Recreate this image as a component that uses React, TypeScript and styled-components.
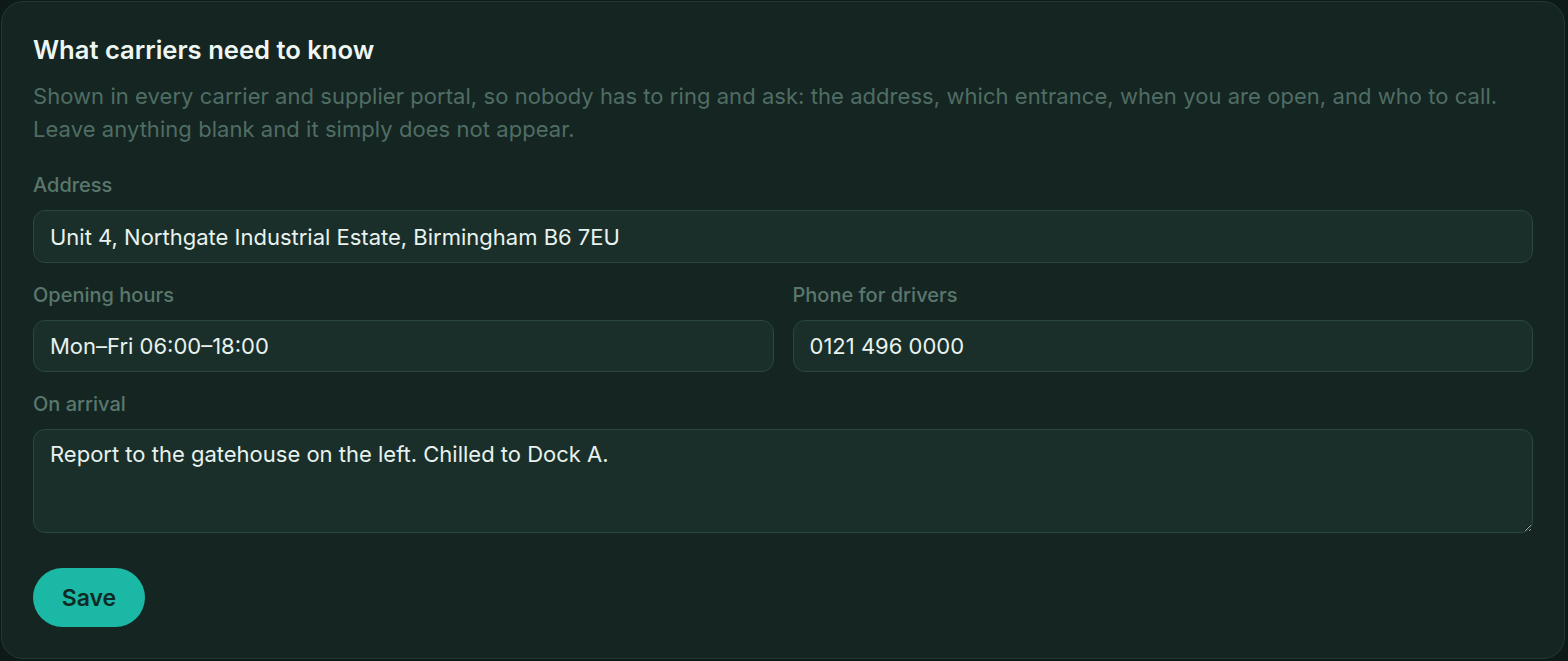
import React from 'react'
import styled, { createGlobalStyle } from 'styled-components'

const GlobalStyle = createGlobalStyle`
	html, body {
		margin: 0;
		background: #0e1a17;
	}
	body {
		font-family: Inter, "Noto Sans", sans-serif;
		-webkit-font-smoothing: antialiased;
	}
`

const Page = styled.div`
	padding: 1px 3px 2px 1px;
`

const Card = styled.section`
	background: #152521;
	border: 1px solid #213a33;
	border-radius: 22px;
	padding: 33px 31px 31px 31px;
`

const Title = styled.h2`
	margin: 0;
	font-size: 25.6px;
	line-height: 30px;
	font-weight: 600;
	color: #eef6f3;
`

const Description = styled.p`
	margin: 15px 0 0 0;
	font-size: 22px;
	line-height: 33px;
	letter-spacing: 0.05px;
	color: #4f6d64;
`

const Form = styled.div`
	display: flex;
	flex-direction: column;
	gap: 20px;
	margin-top: 27px;
`

const Row = styled.div`
	display: grid;
	grid-template-columns: 1fr 1fr;
	gap: 19px;
`

const Field = styled.label`
	display: flex;
	flex-direction: column;
	gap: 13px;
`

const FieldLabel = styled.span`
	font-size: 20px;
	line-height: 24px;
	font-weight: 500;
	color: #5a776e;
`

const Input = styled.input`
	box-sizing: border-box;
	width: 100%;
	height: ${(p: { $h?: number }) => p.$h ?? 52}px;
	padding: 0 16px;
	background: #1b2f2a;
	border: 1px solid #2a4740;
	border-radius: 12px;
	font-family: inherit;
	font-size: 22px;
	color: #e8f2ee;
	outline: none;
`

const TextArea = styled.textarea`
	box-sizing: border-box;
	width: 100%;
	height: 104px;
	padding: 10px 16px;
	background: #1b2f2a;
	border: 1px solid #2a4740;
	border-radius: 12px;
	font-family: inherit;
	font-size: 22px;
	line-height: 28px;
	color: #e8f2ee;
	outline: none;
	resize: vertical;
	display: block;
`

const SaveButton = styled.button`
	margin-top: 35px;
	width: 112px;
	height: 59px;
	border: none;
	border-radius: 30px;
	background: #1ab8a5;
	color: #0f2a25;
	font-family: inherit;
	font-size: 23px;
	font-weight: 600;
	cursor: pointer;
`

const App = () => {
	return (
		<Page>
			<GlobalStyle />
			<Card>
				<Title>What carriers need to know</Title>
				<Description>
					Shown in every carrier and supplier portal, so nobody has to ring and ask: the address, which entrance, when you are open, and who to call.
					<br />
					Leave anything blank and it simply does not appear.
				</Description>
				<Form>
					<Field>
						<FieldLabel>Address</FieldLabel>
						<Input $h={53} defaultValue="Unit 4, Northgate Industrial Estate, Birmingham B6 7EU" />
					</Field>
					<Row>
						<Field>
							<FieldLabel>Opening hours</FieldLabel>
							<Input defaultValue="Mon–Fri 06:00–18:00" />
						</Field>
						<Field>
							<FieldLabel>Phone for drivers</FieldLabel>
							<Input defaultValue="0121 496 0000" />
						</Field>
					</Row>
					<Field>
						<FieldLabel>On arrival</FieldLabel>
						<TextArea defaultValue="Report to the gatehouse on the left. Chilled to Dock A." />
					</Field>
				</Form>
				<SaveButton>Save</SaveButton>
			</Card>
		</Page>
	)
}

export default App
